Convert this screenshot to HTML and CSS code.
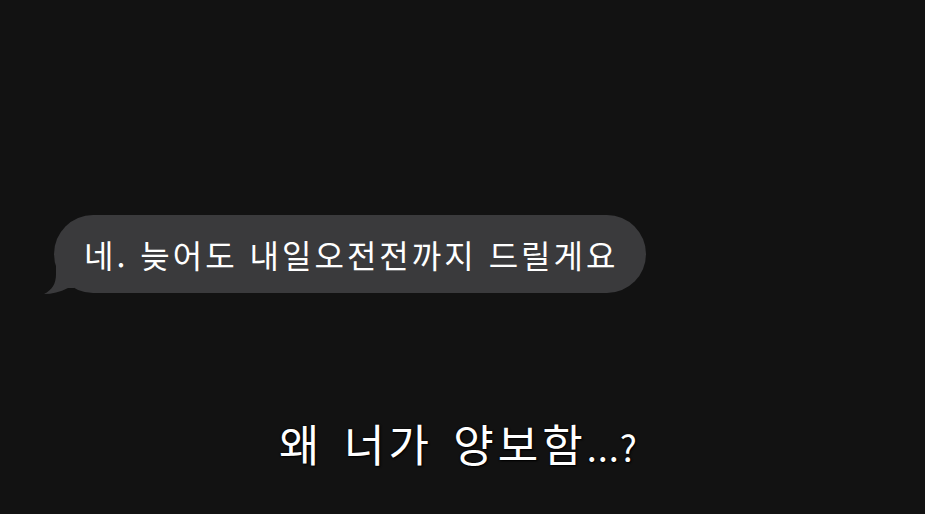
FILE: index.html
```html
<!DOCTYPE html>
<html lang="ko">
<head>
    <meta charset="UTF-8">
    <meta name="viewport" content="width=device-width, initial-scale=1.0">
    <title>메시지</title>
    <link rel="stylesheet" href="styles.css">
</head>
<body>
    <div class="screen">
        <div class="thread">
            <div class="bubble">
                <svg class="bubble-tail" width="30" height="34" viewBox="0 0 30 34">
                    <path d="M12 0 L12 14 C12 24 8 30 0 34 C8 34 16 32 24 28 L30 28 L30 0 Z" fill="#3a3a3c"/>
                </svg>
                <span class="bubble-text">네. 늦어도 내일오전전까지 드릴게요</span>
            </div>
        </div>
        <p class="caption">왜 너가 양보함<span class="caption-dots">...?</span></p>
    </div>
</body>
</html>
```

FILE: styles.css
```css
:root {
    --background: #121212;
    --bubble: #3a3a3c;
    --text: #f5f5f5;
}

* {
    box-sizing: border-box;
    margin: 0;
    padding: 0;
}

body {
    background: var(--background);
    font-family: "Noto Sans CJK KR", "Noto Sans", sans-serif;
    color: var(--text);
}

.screen {
    width: 925px;
    height: 514px;
    overflow: hidden;
    display: flex;
    flex-direction: column;
}

.thread {
    padding: 215px 0 0 54px;
}

.bubble {
    position: relative;
    display: inline-flex;
    align-items: center;
    height: 78px;
    padding: 0 28px 0 30px;
    border-radius: 39px;
    background: var(--bubble);
}

.bubble-tail {
    position: absolute;
    left: -10px;
    bottom: -1px;
}

.bubble-text {
    position: relative;
    font-size: 32px;
    letter-spacing: 3px;
    white-space: nowrap;
    color: #ffffff;
}

.caption {
    margin-top: 118px;
    padding-right: 8px;
    text-align: center;
    font-size: 44px;
    letter-spacing: 4px;
    word-spacing: 4px;
    color: #ffffff;
    text-shadow: 0 0 2px #000, 1px 1px 2px #000;
}

.caption-dots {
    font-size: 36px;
    letter-spacing: 1px;
}
```
